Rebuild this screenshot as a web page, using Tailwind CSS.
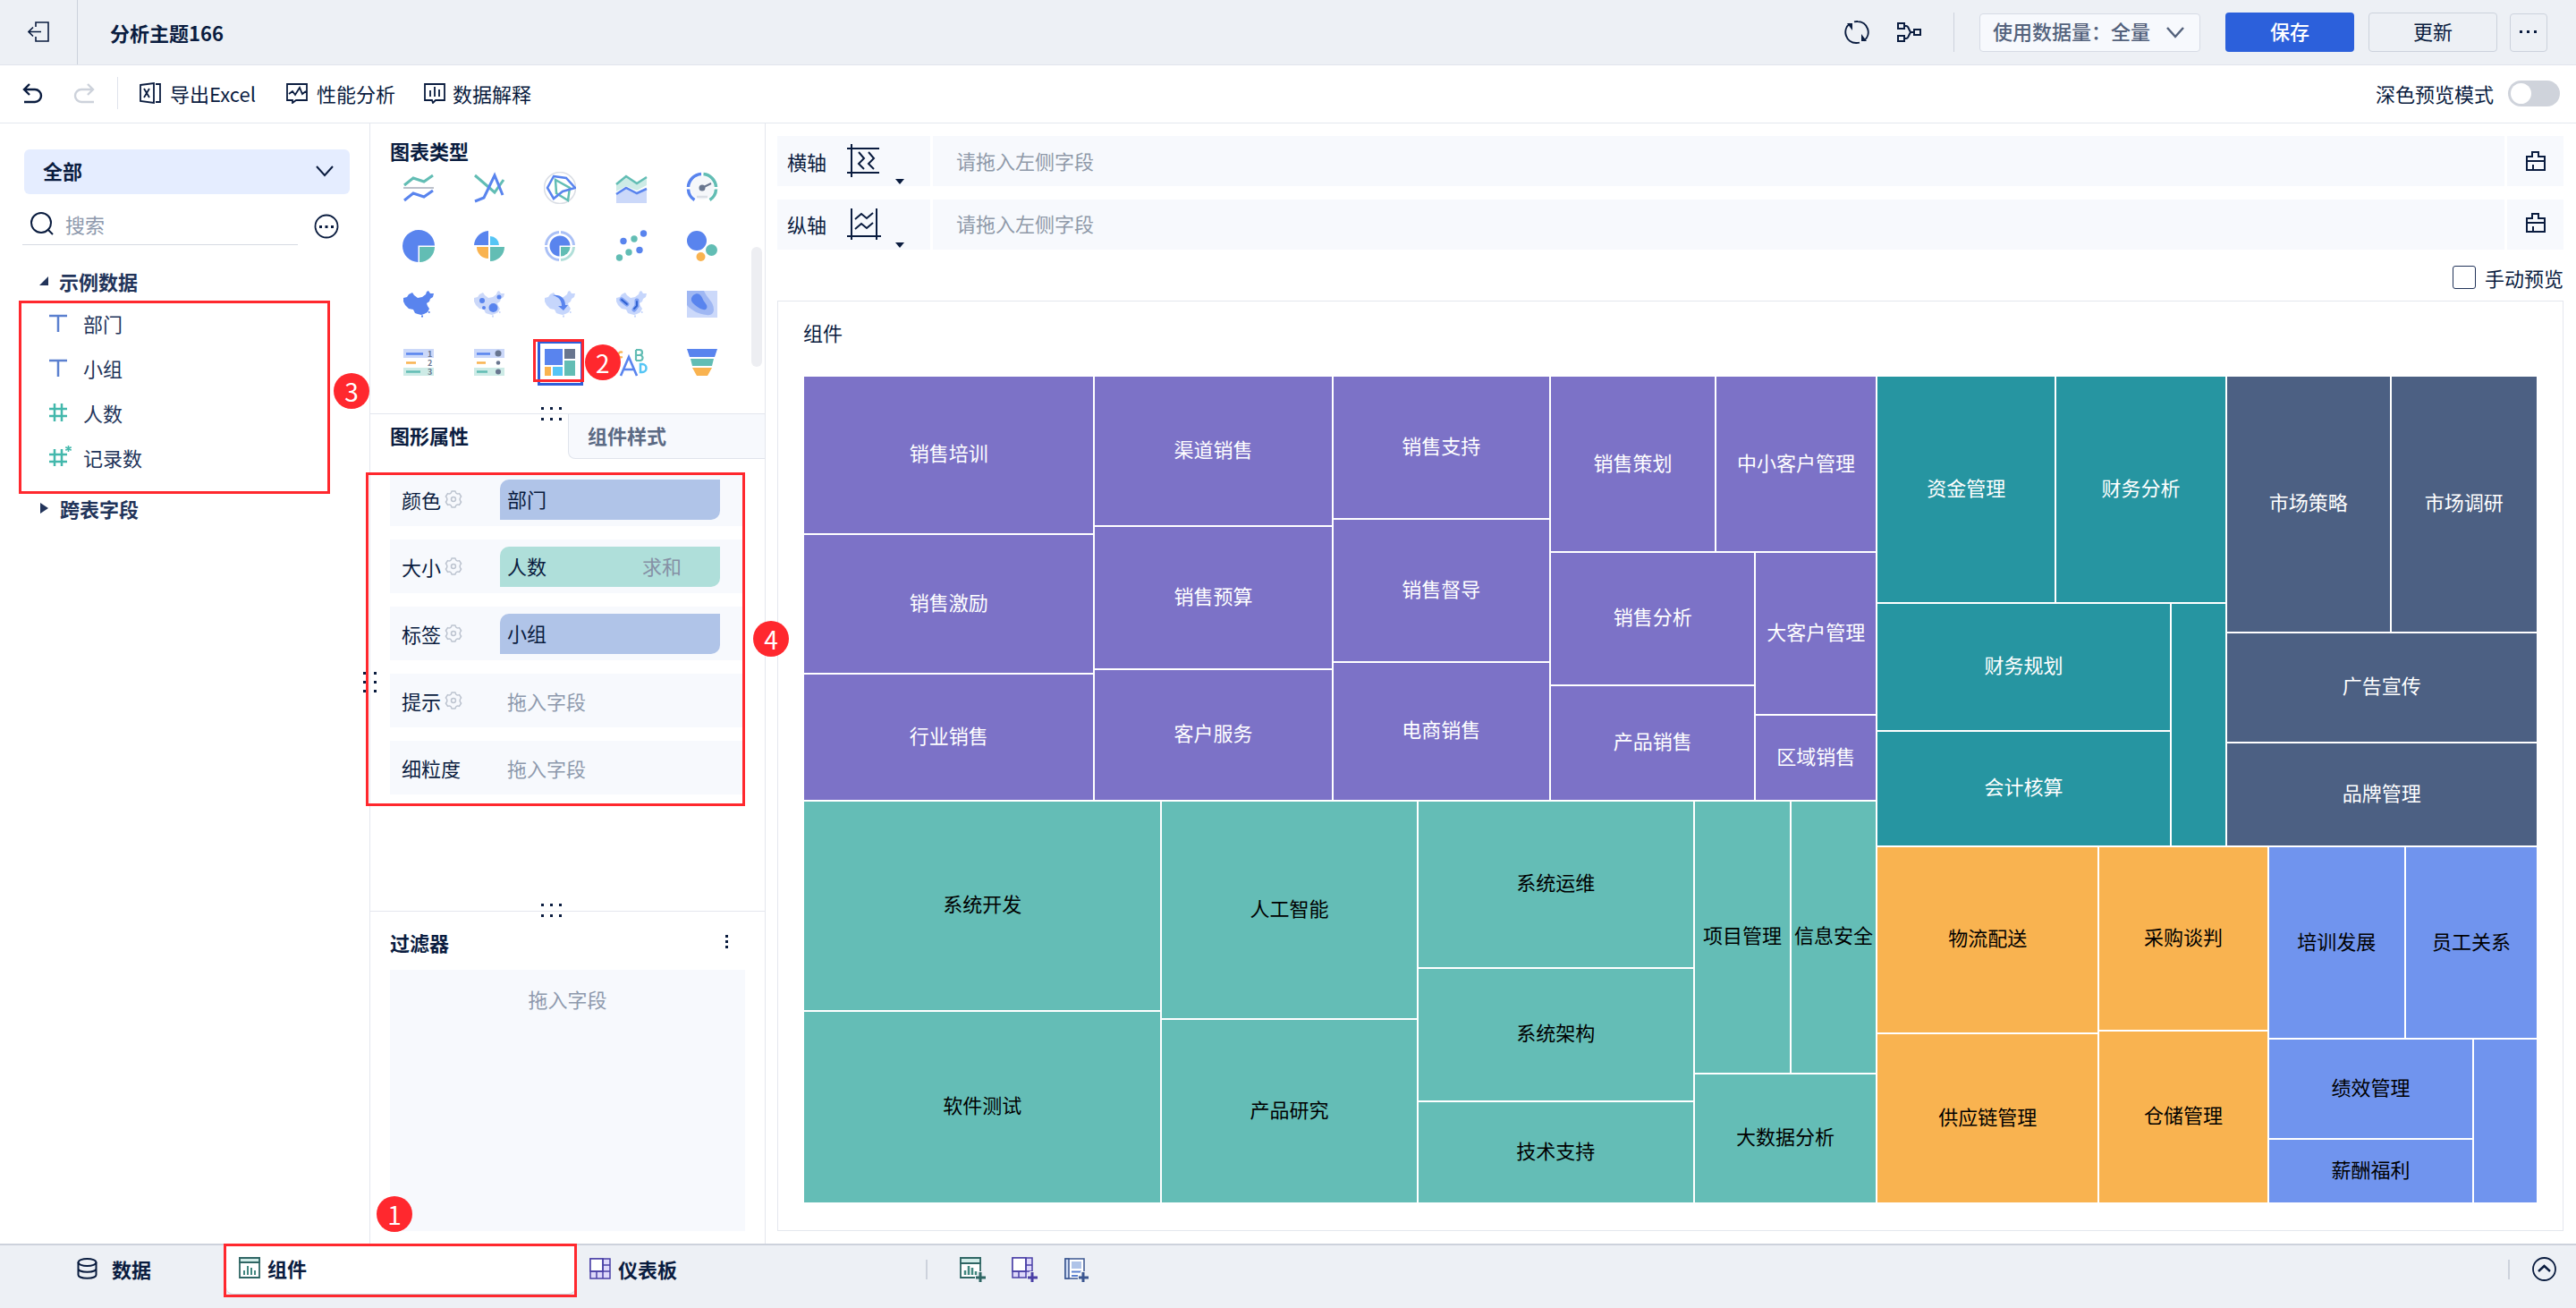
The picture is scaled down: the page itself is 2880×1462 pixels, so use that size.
<!DOCTYPE html>
<html lang="zh-CN">
<head>
<meta charset="utf-8">
<title>分析主题166</title>
<script src="https://cdn.jsdelivr.net/npm/@tailwindcss/browser@4"></script>
</head>
<body class="flex min-h-screen flex-col bg-white font-['Noto_Sans_CJK_SC',sans-serif] text-[22px] leading-8 text-[#0a1c3f]">

<svg class="hidden" aria-hidden="true">
  <symbol id="china" viewBox="0 0 34 30">
    <path d="M0 8 4 7 6 4 10 2 12 5 16 8 21 7 25 4 26 1 28 0 30 3 34 3 33 7 30 9 29 12 26 14 27 17 29 20 27 24 23 26 20 27 16 26 13 25 11 21 6 20 2 16 0 12ZM20 27.500h2v2h-2ZM28 23h1.500v2h-1.500Z"/>
  </symbol>
  <symbol id="gear" viewBox="0 0 20 20">
    <path fill="none" stroke="currentColor" stroke-width="1.500" stroke-linejoin="round" d="M8 1h4c.4 2.600 2 3.400 4.500 2.600L18.600 7c-2 1.800-2 4.200 0 6l-2.100 3.400C14 15.600 12.400 16.400 12 19H8c-.4-2.600-2-3.400-4.500-2.600L1.400 13c2-1.800 2-4.200 0-6l2.100-3.400C6 4.400 7.600 3.600 8 1Z"/>
    <circle cx="10" cy="10" r="2.500" fill="none" stroke="currentColor" stroke-width="1.500"/>
  </symbol>
  <symbol id="brush" viewBox="0 0 24 24">
    <path fill="none" stroke="currentColor" stroke-width="2" d="M2 7h6V2h7v5h7v15H2ZM2 12h20M9 16v6"/>
  </symbol>
  <symbol id="dots" viewBox="0 0 24 16">
    <path fill="currentColor" d="M0 1h3v3H0zM10 1h3v3h-3zM20 1h3v3h-3zM0 13h3v3H0zM10 13h3v3h-3zM20 13h3v3h-3z"/>
  </symbol>
</svg>

<header class="flex h-[73px] items-center border-b border-[#e0e4ec] bg-[#edf0f5]">
  <button class="flex h-full w-[87px] items-center justify-center border-r border-[#ccd2dc]" aria-label="返回">
    <svg class="h-6 w-6" viewBox="0 0 24 24" fill="none" stroke="currentColor" stroke-width="1.600"><path d="M9 6V1h14v21H9v-5M1 11.500h14M6 6.500l-5 5 5 5"/></svg>
  </button>
  <h1 class="ml-9 font-bold">分析主题166</h1>
  <div class="ml-auto flex items-center pr-8">
    <button aria-label="刷新"><svg class="h-7 w-7" viewBox="0 0 28 28" fill="none" stroke="currentColor" stroke-width="2"><path d="M13 26A12 12 0 0 1 6 4.500M15 2A12 12 0 0 1 22 23.500M11 2.400q2-.5 4-.4M13 26q2 .1 4-.4"/><path fill="currentColor" stroke="none" d="M3 4h6v8zM25 24h-6v-8z"/></svg></button>
    <button class="ml-[30px]" aria-label="血缘"><svg class="h-6 w-7" viewBox="0 0 28 24" fill="none" stroke="currentColor" stroke-width="2"><path d="M2 2h7v6H2zM2 16h7v6H2zM20 9h7v6h-7zM9 5h2q2 0 3 3l2 4-2 4q-1 3-3 3H9M16 12h4"/></svg></button>
    <span class="ml-9 h-11 w-px bg-[#ccd2dc]"></span>
    <label class="relative ml-7 block">
      <select class="h-[43px] w-[247px] appearance-none rounded border border-[#d6dbe5] bg-[#f7f9fd] pb-1 pl-3.5 font-medium text-[#54627c]" aria-label="使用数据量"><option>使用数据量：全量</option></select>
      <svg class="pointer-events-none absolute top-[11px] right-4 h-5 w-6" viewBox="0 0 24 20" fill="none" stroke="#54627c" stroke-width="2.500"><path d="M3 5l9 10 9-10"/></svg>
    </label>
    <button class="ml-7 h-11 w-36 rounded bg-[#2c60db] pb-1 font-medium text-white">保存</button>
    <button class="ml-4 h-11 w-36 rounded border border-[#ccd2dc] pb-1">更新</button>
    <button class="ml-3.5 flex h-[43px] w-[42px] items-center justify-center rounded border border-[#ccd2dc]" aria-label="更多">
      <svg class="h-1 w-5" viewBox="0 0 20 4" fill="currentColor"><path d="M0 0h3v3H0zM8 0h3v3H8zM16 0h3v3h-3z"/></svg>
    </button>
  </div>
</header>

<div class="flex h-[65px] items-center border-b border-[#e4e7ee] pb-0.5 pl-6">
  <button aria-label="撤销"><svg class="h-6 w-6" viewBox="0 0 24 24" fill="none" stroke="currentColor" stroke-width="2.400"><path d="M3 22h12a7 7 0 0 0 0-14H3M9 2 3 8l6 6"/></svg></button>
  <button class="ml-[34px] text-[#cdd2db]" aria-label="重做"><svg class="h-6 w-6" viewBox="0 0 24 24" fill="none" stroke="currentColor" stroke-width="2.400"><path d="M23 22H9A7 7 0 0 1 9 8h13M16 2l6 6-6 6"/></svg></button>
  <span class="ml-[25px] h-9 w-px bg-[#e0e4ec]"></span>
  <button class="ml-6 flex items-center gap-2.5">
    <svg class="h-6 w-6" viewBox="0 0 24 24" fill="none" stroke="currentColor" stroke-width="1.800"><path d="M1 3 16 1v22L1 21ZM18 2h5v20h-5M5 7l6 10M11 7 5 17"/></svg>导出Excel
  </button>
  <button class="ml-[34px] flex items-center gap-2.5">
    <svg class="h-6 w-6" viewBox="0 0 24 24" fill="none" stroke="currentColor" stroke-width="1.800"><path d="M1 2h22v18H11l-4 3v-3H1ZM3 13l4-3 3 4 5-8 3 7 4-3"/></svg>性能分析
  </button>
  <button class="ml-8 flex items-center gap-2">
    <svg class="h-6 w-6" viewBox="0 0 24 24" fill="none" stroke="currentColor" stroke-width="1.800"><path d="M1 2h22v18H13l-3 3-1-3H1ZM7 9v7M12 5v11M17 8v8"/></svg>数据解释
  </button>
  <label class="ml-auto flex items-center gap-4 pr-[18px]">深色预览模式
    <input type="checkbox" class="h-[29px] w-[58px] appearance-none rounded-full bg-[#cfd3db] before:mt-[3px] before:ml-[3px] before:block before:h-[23px] before:w-[23px] before:rounded-full before:bg-white">
  </label>
</div>

<main class="flex flex-1">
  <!-- Field list -->
  <aside class="w-[414px] shrink-0 border-r border-[#e4e7ee] pt-[29px]">
    <label class="relative mx-[27px] mr-[22px] block">
      <select class="h-[50px] w-full appearance-none rounded-md bg-[#e5edff] pb-1 pl-[21px] font-bold" aria-label="分组"><option>全部</option></select>
      <svg class="pointer-events-none absolute top-4 right-4 h-4 w-6" viewBox="0 0 24 16" fill="none" stroke="currentColor" stroke-width="2"><path d="M3 3l9 10 9-10"/></svg>
    </label>
    <div class="flex items-center pt-3.5 pl-[25px]">
      <label class="flex h-[43px] w-[308px] items-center gap-3 border-b border-[#d6dae2] pb-1 pl-2">
        <svg class="h-7 w-7 shrink-0" viewBox="0 0 28 28" fill="none" stroke="currentColor" stroke-width="2"><circle cx="13" cy="13" r="11"/><path d="m20 20 6 6"/></svg>
        <input type="text" placeholder="搜索" class="w-40 placeholder:text-[#8e99ad]">
      </label>
      <button class="ml-[18px]" aria-label="更多选项"><svg class="h-7 w-7" viewBox="0 0 28 28" fill="none" stroke="currentColor" stroke-width="1.800"><circle cx="14" cy="14" r="12.500"/><path fill="currentColor" stroke="none" d="M6 13h3v3H6zM12.500 13h3v3h-3zM19 13h3v3h-3z"/></svg></button>
    </div>
    <div class="mt-6 flex items-center gap-3 pl-11 font-bold text-[#22345a]">
      <svg class="h-2.5 w-2.5" viewBox="0 0 10 10" fill="currentColor"><path d="M10 0v10H0z"/></svg>示例数据
    </div>
    <div class="relative mt-1.5 pb-4 text-[#22345a]">
      <ul class="pl-[55px] [&>li]:flex [&>li]:h-[50px] [&>li]:items-center [&>li]:gap-[18px]">
        <li><svg class="h-5 w-5" viewBox="0 0 20 20" stroke="#5b80cf" stroke-width="2.500"><path d="M0 2h20M10 2v18"/></svg>部门</li>
        <li><svg class="h-5 w-5" viewBox="0 0 20 20" stroke="#5b80cf" stroke-width="2.500"><path d="M0 2h20M10 2v18"/></svg>小组</li>
        <li><svg class="h-5 w-5" viewBox="0 0 20 20" stroke="#43b8ac" stroke-width="2.500"><path d="M0 6h20M0 14h20M6 0v20M14 0v20"/></svg>人数</li>
        <li><svg class="h-5 w-5 overflow-visible" viewBox="0 0 20 20" stroke="#43b8ac" stroke-width="2.500"><path d="M0 7h20M0 15h20M6 1v19M14 1v19"/><path stroke-width="1.600" d="M21.500-3v7M18.300-1.300l6.400 3.600M24.700-1.300l-6.400 3.600"/></svg>记录数</li>
      </ul>
      <div class="absolute top-0 right-[44px] bottom-0 left-[21px] border-3 border-[#ff282e]"></div>
      <span class="absolute top-[81px] right-0 flex h-10 w-10 items-center justify-center rounded-full bg-[#ff282e] text-[28px] text-white">3</span>
    </div>
    <div class="flex items-center gap-3 pl-[45px] font-bold text-[#22345a]">
      <svg class="h-3 w-2.5" viewBox="0 0 10 12" fill="currentColor"><path d="M0 0v12l9-6z"/></svg>跨表字段
    </div>
  </aside>

  <!-- Chart configuration -->
  <section class="relative flex w-[442px] shrink-0 flex-col border-r border-[#e4e7ee]">
    <div class="relative h-[325px] border-b border-[#e4e7ee] pt-3.5">
      <h2 class="pl-[22px] font-bold">图表类型</h2>
      <div class="-mt-[7px] grid grid-cols-5 grid-rows-4 pr-[30px] pl-[14px] [&_svg]:h-9 [&_svg]:w-9 [&>button]:flex [&>button]:h-[65px] [&>button]:items-center [&>button]:justify-center">
        <button aria-label="分区折线图"><svg viewBox="0 0 36 36" fill="none" stroke-width="3"><path stroke="#62bdb4" d="M2 15l10-8 12 4L34 4"/><path stroke="#a4abb8" stroke-width="1.500" d="M1 18h34"/><path stroke="#5984ee" d="M2 32l10-8 12 4 10-7"/></svg></button>
        <button aria-label="折线图"><svg viewBox="0 0 36 36" fill="none" stroke-width="3"><path stroke="#62bdb4" d="M2 4l22 19L34 9"/><path stroke="#5984ee" d="M2 33l10-4L24 4l9 22"/></svg></button>
        <button aria-label="雷达图"><svg viewBox="0 0 36 36" fill="none"><circle cx="18" cy="18" r="17.500" stroke="#dadee5" stroke-width="1.500"/><path stroke="#62bdb4" stroke-width="2.500" d="M13 9l16 9-2 14-13-8Z"/><path stroke="#5984ee" stroke-width="2.500" d="M11 5l14 2 10 11-14 4-10 8-7-12Z"/></svg></button>
        <button aria-label="面积图"><svg viewBox="0 0 36 36" fill="none"><path fill="#cdebe6" d="M1 14l11-9 12 8 11-7v9l-11 6-12-5-11 6z"/><path fill="#cbd8f9" d="M1 25l11-7 12 6 11-5v16H1z"/><path stroke="#62bdb4" stroke-width="2.500" d="M1 14l11-9 12 8 11-7"/><path stroke="#5984ee" stroke-width="2.500" d="M1 25l11-7 12 6 11-5"/></svg></button>
        <button aria-label="仪表盘"><svg viewBox="0 0 36 36" fill="none"><circle cx="18" cy="18" r="13" fill="#f5f7fa"/><path stroke="#5984ee" stroke-width="3.500" d="M17 2.500A15.500 15.500 0 0 0 2.500 17M2.500 19.500a15 15 0 0 0 7 12"/><path stroke="#62bdb4" stroke-width="3.500" d="M19.500 2.500A15.500 15.500 0 0 1 33.500 17M33.500 19.500a15 15 0 0 1-7 12"/><circle cx="18" cy="18" r="3.500" fill="#69768f"/><path stroke="#69768f" stroke-width="2" d="M18 18l10-5"/><path stroke="#dadee5" stroke-width="2.500" d="M12 28h12"/></svg></button>

        <button aria-label="饼图"><svg viewBox="0 0 36 36"><path fill="#5984ee" d="M17.500 36A18 18 0 1 1 36 17.500H17.500z"/><path fill="#62bdb4" d="M19 19h17a17 17 0 0 1-17 17z"/></svg></button>
        <button aria-label="玫瑰图"><svg viewBox="0 0 36 36"><path fill="#5984ee" d="M17 17H1A17 17 0 0 1 17 1z"/><path fill="#55c5f5" d="M19 17V7a10 10 0 0 1 10 10z"/><path fill="#f9b350" d="M17 19v13A13 13 0 0 1 4 19z"/><path fill="#62bdb4" d="M19 19h16a16 16 0 0 1-16 16z"/></svg></button>
        <button aria-label="多层饼图"><svg viewBox="0 0 36 36" fill="none"><path stroke="#aac0f6" stroke-width="3" d="M17 2.500A15.500 15.500 0 0 0 2.500 17M2.500 19A15.500 15.500 0 0 0 17 33.500M19 2.500A15.500 15.500 0 0 1 33.500 17"/><path stroke="#b1dfd9" stroke-width="3" d="M33.500 19A15.500 15.500 0 0 1 19 33.500"/><path fill="#5984ee" d="M17.500 29.500A11.500 11.500 0 1 1 29.500 17.500h-12z"/><path fill="#62bdb4" d="M19 19h10.500A11 11 0 0 1 19 29.500z"/></svg></button>
        <button aria-label="散点图"><svg viewBox="0 0 36 36"><g fill="#5984ee"><circle cx="31.500" cy="4" r="3.700"/><circle cx="9" cy="12.500" r="3.700"/><circle cx="27" cy="22.500" r="3.700"/></g><g fill="#62bdb4"><circle cx="21" cy="10" r="3.700"/><circle cx="15" cy="25" r="3.700"/><circle cx="4.500" cy="31" r="3.700"/></g></svg></button>
        <button aria-label="气泡图"><svg viewBox="0 0 36 36"><circle cx="12" cy="12" r="11" fill="#5984ee"/><circle cx="28.500" cy="22.500" r="6.500" fill="#62bdb4"/><circle cx="16.500" cy="30" r="5" fill="#f9b350"/></svg></button>

        <button aria-label="区域地图"><svg viewBox="0 0 36 36"><use href="#china" x="1" y="3" width="34" height="30" fill="#5984ee"/></svg></button>
        <button aria-label="点地图"><svg viewBox="0 0 36 36"><use href="#china" x="1" y="3" width="34" height="30" fill="#cbd8f9"/><g fill="#5984ee"><circle cx="10" cy="14" r="3"/><circle cx="29" cy="10" r="2.500"/><circle cx="12" cy="22" r="2"/><circle cx="22.500" cy="22" r="5"/></g></svg></button>
        <button aria-label="流向地图"><svg viewBox="0 0 36 36"><use href="#china" x="1" y="3" width="34" height="30" fill="#c6d6fc"/><path fill="#5984ee" d="M10 8c9-1 14 4 14 11l3 0-5 6-6-5h4c0-6-3-10-10-12z"/></svg></button>
        <button aria-label="热力地图"><svg viewBox="0 0 36 36"><use href="#china" x="1" y="3" width="34" height="30" fill="#c6d6fc"/><path fill="none" stroke="#7ea0f3" stroke-width="5" stroke-linecap="round" d="M7 13l6 5M24 14v6l-3 4"/><path fill="none" stroke="#2c5fcf" stroke-width="1.800" stroke-linecap="round" d="M7 13l6 5M24 15v5l-3 3"/></svg></button>
        <button aria-label="轮廓图"><svg viewBox="0 0 36 36"><path fill="#ccd9fa" d="M1 3h34v30H1z"/><path fill="#9fb7f3" d="M1 3h19c3 8 11 12 11 21 0 4-3 7-8 6C14 29 6 25 1 19z"/><path fill="#5984ee" d="M8 8c6-4 9 0 11 5 2 4 7 7 3 11-4 1-10-3-13-6-4-3-4-7-1-10z"/></svg></button>

        <button aria-label="分组表"><svg viewBox="0 0 36 36"><path fill="#cbd8f9" d="M1 3h34v10H1z"/><path fill="#cdebe6" d="M1 24h34v9H1z"/><path stroke="#5984ee" stroke-width="2.500" d="M4 8.500h19"/><path stroke="#f9b350" stroke-width="2.500" d="M4 18.500h11"/><path stroke="#62bdb4" stroke-width="2.500" d="M4 28.500h16"/><g fill="#69768f" font-size="9" font-weight="700"><text x="28" y="11.500">1</text><text x="28" y="21.500">2</text><text x="28" y="31.500">3</text></g></svg></button>
        <button aria-label="明细表"><svg viewBox="0 0 36 36"><path fill="#cbd8f9" d="M1 3h34v10H1z"/><path fill="#cdebe6" d="M1 24h34v9H1z"/><path stroke="#5984ee" stroke-width="2.500" d="M4 8.500h15"/><path stroke="#f9b350" stroke-width="2.500" d="M4 18.500h10"/><path stroke="#62bdb4" stroke-width="2.500" d="M4 28.500h12"/><g fill="#69768f"><circle cx="28" cy="8" r="3.500"/><circle cx="28" cy="18.500" r="2.300"/><circle cx="28" cy="28.500" r="3"/></g></svg></button>
        <button class="relative" aria-label="矩形树图">
          <svg viewBox="0 0 36 36"><path fill="#5984ee" d="M1 3h20v18H1z"/><path fill="#69768f" d="M23 3h12v11H23z"/><path fill="#62bdb4" d="M23 16h12v17H23z"/><path fill="#f9b350" d="M1 23h7v10H1z"/><path fill="#55c5f5" d="M10 23h11v10H10z"/></svg>
          <span class="absolute top-[9px] left-[14px] h-[50px] w-[51px] border-3 border-[#2f5fd9]"></span>
          <span class="absolute top-[7px] left-[9px] h-12 w-[57px] border-3 border-[#ff282e]"></span>
          <span class="absolute top-[13px] left-[67px] z-10 flex h-10 w-10 items-center justify-center rounded-full bg-[#ff282e] text-[28px] text-white">2</span>
        </button>
        <button aria-label="词云"><svg viewBox="0 0 36 36" fill="none" stroke-width="2.200"><path stroke="#5984ee" stroke-width="2.600" d="M6 33l9-21 9 21M9 26h12"/><path stroke="#62bdb4" d="M23 4v12M23 4h4a3 3 0 0 1 0 6h-4M27 10a3 3 0 0 1 1 6h-5"/><path stroke="#55c5f5" stroke-width="2.500" d="M28 20v9h2a4 4 0 0 0 0-9z"/><path stroke="#f9b350" d="M8 7c-5-3-7 7 0 5"/></svg></button>
        <button aria-label="漏斗图"><svg viewBox="0 0 36 36"><path fill="#5984ee" d="M1 3h34l-3 9H4z"/><path fill="#62bdb4" d="M5 14h26l-2 8H7z"/><path fill="#f9b350" d="M7 24h22l-5 9H12z"/></svg></button>
      </div>
      <span class="absolute top-[138px] right-[3px] h-[134px] w-3 rounded-full bg-[#edeef2]"></span>
      <svg class="absolute -bottom-2 left-[191px] h-4 w-6"><use href="#dots"/></svg>
    </div>

    <div class="flex h-[50px]">
      <button class="w-[221px] pb-1 pl-[22px] text-left font-bold">图形属性</button>
      <button class="flex-1 rounded-bl-lg border-b border-l border-[#e0e4ec] bg-[#f7f9fd] pb-1 pl-[21px] text-left font-bold text-[#5b6a84]">组件样式</button>
    </div>

    <div class="relative mt-[15px] pb-[13px]">
      <div class="flex flex-col gap-[15px] pr-[22px] pl-[22px] [&_button]:pb-0.5 [&>div]:flex [&>div]:h-15 [&>div]:items-center [&>div]:bg-[#f7f9fd] [&>div]:pl-[13px]">
        <div><span class="flex w-[110px] items-center gap-1">颜色<svg class="h-5 w-5 text-[#bcc3cf]"><use href="#gear"/></svg></span><button class="h-[45px] w-[246px] rounded-tl-[10px] rounded-br-[10px] bg-[#b0c4e8] pl-2 text-left">部门</button></div>
        <div><span class="flex w-[110px] items-center gap-1">大小<svg class="h-5 w-5 text-[#bcc3cf]"><use href="#gear"/></svg></span><button class="flex h-[45px] w-[246px] items-center justify-between rounded-tl-[10px] rounded-br-[10px] bg-[#afdfda] pr-[43px] pl-2">人数<span class="text-[#8590a5]">求和</span></button></div>
        <div><span class="flex w-[110px] items-center gap-1">标签<svg class="h-5 w-5 text-[#bcc3cf]"><use href="#gear"/></svg></span><button class="h-[45px] w-[246px] rounded-tl-[10px] rounded-br-[10px] bg-[#b0c4e8] pl-2 text-left">小组</button></div>
        <div><span class="flex w-[110px] items-center gap-1">提示<svg class="h-5 w-5 text-[#bcc3cf]"><use href="#gear"/></svg></span><span class="pl-2 text-[#8e99ad]">拖入字段</span></div>
        <div><span class="w-[110px]">细粒度</span><span class="pl-2 text-[#8e99ad]">拖入字段</span></div>
      </div>
      <svg class="absolute top-[223px] -left-3 h-6 w-6 rotate-90"><use href="#dots" width="24" height="16" y="4"/></svg>
      <div class="absolute top-0 right-[22px] bottom-0 -left-[5px] border-3 border-[#ff282e]"></div>
      <span class="absolute top-[166px] -right-[27px] z-10 flex h-10 w-10 items-center justify-center rounded-full bg-[#ff282e] text-[28px] text-white">4</span>
    </div>

    <div class="relative mt-[117px] flex flex-1 flex-col border-t border-[#e4e7ee] px-[22px] pt-[18px] pb-3.5">
      <svg class="absolute -top-2.5 left-[191px] h-4 w-6"><use href="#dots"/></svg>
      <div class="flex items-center justify-between pr-[18px]">
        <h2 class="font-bold">过滤器</h2>
        <button aria-label="过滤器选项"><svg class="h-4 w-1" viewBox="0 0 4 16" fill="currentColor"><path d="M0 0h3v3H0zM0 6h3v3H0zM0 12h3v3H0z"/></svg></button>
      </div>
      <div class="mt-[15px] flex-1 bg-[#f7f9fd] pt-4 text-center text-[#8e99ad]">拖入字段</div>
    </div>
    <span class="absolute bottom-[13px] left-[7px] flex h-10 w-10 items-center justify-center rounded-full bg-[#ff282e] text-[28px] text-white">1</span>
  </section>

  <!-- Canvas -->
  <section class="flex min-w-0 flex-1 flex-col pt-3.5 pr-3.5 pb-3.5 pl-[13px]">
    <div class="flex h-14 gap-[3px]">
      <div class="relative flex w-[171px] items-center bg-[#f7f9fd] pl-[11px]">横轴
        <button class="ml-[22px]" aria-label="横轴类型"><svg class="h-10 w-10" viewBox="0 0 40 40" fill="none" stroke="currentColor" stroke-width="2"><path d="M6 1v37M1 6h36M1 33h36M14 10l6 7-6 6 6 6M25 10l6 7-6 6 6 6"/></svg></button>
        <svg class="absolute right-[29px] bottom-0.5 h-1.5 w-2.5" viewBox="0 0 10 6" fill="currentColor"><path d="M0 0h10L5 6z"/></svg>
      </div>
      <div class="flex flex-1 items-center bg-[#f7f9fd] pb-0.5 pl-[26px] text-[#8f99a9]">请拖入左侧字段</div>
      <button class="flex w-[63px] items-center justify-center bg-[#f7f9fd]" aria-label="清空横轴"><svg class="h-6 w-6"><use href="#brush"/></svg></button>
    </div>
    <div class="mt-[15px] flex h-14 gap-[3px]">
      <div class="relative flex w-[171px] items-center bg-[#f7f9fd] pb-0.5 pl-[11px]">纵轴
        <button class="ml-[22px]" aria-label="纵轴类型"><svg class="h-10 w-10" viewBox="0 0 40 40" fill="none" stroke="currentColor" stroke-width="2"><path d="M6 3v35M34 3v35M1 34h38M10 15l7-6 6 5 7-6M10 26l7-6 6 5 7-6"/></svg></button>
        <svg class="absolute right-[29px] bottom-0.5 h-1.5 w-2.5" viewBox="0 0 10 6" fill="currentColor"><path d="M0 0h10L5 6z"/></svg>
      </div>
      <div class="flex flex-1 items-center bg-[#f7f9fd] pb-1 pl-[26px] text-[#8f99a9]">请拖入左侧字段</div>
      <button class="flex w-[63px] items-center justify-center bg-[#f7f9fd] pb-1" aria-label="清空纵轴"><svg class="h-6 w-6"><use href="#brush"/></svg></button>
    </div>
    <label class="mt-[15px] flex h-8 items-center gap-2.5 self-end">
      <input type="checkbox" class="h-[26px] w-[26px] appearance-none rounded-[3px] border border-[#22345a] bg-white">手动预览
    </label>
    <div class="mt-[10px] flex flex-1 flex-col border border-[#e4e7ee] px-7 pt-[18px] pb-[30px]">
      <h3>组件</h3>
      <div id="treemap" class="mt-[33px] flex flex-1"></div>
    </div>
  </section>
</main>

<footer class="flex h-[72px] items-start border-t-2 border-[#cdd2dc] bg-[#edf0f5] font-bold">
  <nav class="flex">
    <a href="#" class="flex h-[55px] w-[253px] items-center gap-4 pb-1 pl-[86px]">
      <svg class="h-6 w-[23px]" viewBox="0 0 23 24" fill="none" stroke="currentColor" stroke-width="2"><ellipse cx="11.500" cy="5" rx="10" ry="4"/><path d="M1.500 5v14c0 5 20 5 20 0V5M1.500 12c0 5 20 5 20 0"/></svg>数据
    </a>
    <a href="#" class="relative flex h-[55px] w-[390px] items-center gap-2 rounded-b-lg border-b border-[#cdd2dc] bg-white pb-1 pl-3.5">
      <svg class="h-6 w-6" viewBox="0 0 24 24" fill="none" stroke="#2f6664" stroke-width="1.800"><path fill="#fff" d="M1 1h22v22H1z"/><path fill="#d2ece8" d="M1 1h22v5H1z"/><path stroke="#41877f" stroke-width="2" d="M6 20v-5M10 20V10M14 20v-8M18 20v-5"/></svg>组件
      <span class="absolute -top-0.5 -right-0.5 -bottom-1 -left-[3px] border-3 border-[#ff282e]"></span>
    </a>
    <a href="#" class="flex h-[55px] items-center gap-2 pb-1 pl-4">
      <svg class="h-6 w-6" viewBox="0 0 24 24" fill="#ded8fa" stroke="#4a3fa6" stroke-width="1.500"><path d="M1 1h22v22H1z"/><path fill="#fff" d="M1 1h14v14H1z"/><path d="M15 1v22M1 15h22M15 8h8M8 15v8"/></svg>仪表板
    </a>
  </nav>
  <span class="mt-4 ml-[278px] h-[22px] w-0.5 bg-[#cdd2dc]"></span>
  <div class="mt-[13px] ml-9 flex gap-7">
    <button aria-label="新建组件"><svg class="h-[29px] w-[30px]" viewBox="0 0 30 29" fill="none" stroke="#2f6664" stroke-width="1.800"><path fill="#fff" d="M1 1h22v22H1z"/><path fill="#d2ece8" d="M1 1h22v6H1z"/><path stroke="#41877f" stroke-width="2.500" d="M6 20v-5M10 20V10M14 20v-8M18 20v-4"/><path stroke="#edf0f5" stroke-width="6" d="M23 16v12M17 23h12"/><path stroke-width="3" d="M23 17v11M18 23h11"/></svg></button>
    <button aria-label="新建仪表板"><svg class="h-[29px] w-[30px]" viewBox="0 0 30 29" fill="none" stroke="#4a3fa6" stroke-width="1.500"><path fill="#ded8fa" d="M1 1h22v22H1z"/><path fill="#fff" d="M1 1h15v15H1z"/><path d="M16 1v22M1 16h22M16 9h7M8 16v7"/><path stroke="#edf0f5" stroke-width="6" d="M23 16v12M17 23h12"/><path stroke-width="3" d="M23 17v11M18 23h11"/></svg></button>
    <button aria-label="新建报告"><svg class="h-[29px] w-[30px]" viewBox="-1 0 30 29" fill="none" stroke="#3b5690" stroke-width="1.500"><path fill="#fff" d="M1 2h21v22H1z"/><path fill="#cfdcf5" d="M1 2h4v22H1z"/><path fill="#b0c4e8" stroke="none" d="M8 5h11v8H8z"/><path stroke="#5b80cf" stroke-width="2" d="M8 16.500h11M8 21h7"/><path stroke="#edf0f5" stroke-width="6" d="M21 16v12M15 23h12"/><path stroke-width="3" d="M21 17v11M16 23h11"/></svg></button>
  </div>
  <span class="mt-4 ml-auto h-[22px] w-0.5 bg-[#cdd2dc]"></span>
  <button class="mt-[13px] mr-[22px] ml-[25px]" aria-label="收起"><svg class="h-[27px] w-[27px]" viewBox="0 0 27 27" fill="none" stroke="currentColor" stroke-width="1.800"><circle cx="13.500" cy="13.500" r="12.500"/><path stroke-width="2.400" d="m7 16 6.500-6 6.500 6"/></svg></button>
</footer>

<script>
// Each node: [weight, 'row' | 'col', children, colour classes] or [weight, label]
const purple = 'bg-[#7c72c7] text-white', teal = 'bg-[#64bdb6] text-black', sea = 'bg-[#2695a1] text-white';
const navy = 'bg-[#4c6083] text-white', amber = 'bg-[#f9b350] text-black', blue = 'bg-[#7094ee] text-black';
const tree = [1, 'row', [
  [1199, 'col', [
    [475, 'row', [
      [325, 'col', [[177, '销售培训'], [156, '销售激励'], [142, '行业销售']]],
      [266, 'col', [[168, '渠道销售'], [160, '销售预算'], [147, '客户服务']]],
      [243, 'col', [[160, '销售支持'], [160, '销售督导'], [155, '电商销售']]],
      [365, 'col', [
        [197, 'row', [[185, '销售策划'], [180, '中小客户管理']]],
        [278, 'row', [
          [230, 'col', [[149, '销售分析'], [129, '产品销售']]],
          [136, 'col', [[183, '大客户管理'], [95, '区域销售']]]
        ]]
      ]]
    ], purple],
    [450, 'row', [
      [400, 'col', [[235, '系统开发'], [215, '软件测试']]],
      [286, 'col', [[244, '人工智能'], [206, '产品研究']]],
      [309, 'col', [[187, '系统运维'], [149, '系统架构'], [114, '技术支持']]],
      [204, 'col', [
        [306, 'row', [[108, '项目管理'], [96, '信息安全']]],
        [144, '大数据分析']
      ]]
    ], teal]
  ]],
  [738, 'col', [
    [526, 'row', [
      [390, 'col', [
        [254, 'row', [[200, '资金管理'], [190, '财务分析']]],
        [272, 'row', [
          [330, 'col', [[143, '财务规划'], [129, '会计核算']]],
          [60, '']
        ]]
      ], sea],
      [348, 'col', [
        [289, 'row', [[184, '市场策略'], [164, '市场调研']]],
        [122, '广告宣传'],
        [115, '品牌管理']
      ], navy]
    ]],
    [399, 'row', [
      [437, 'row', [
        [248, 'col', [[209, '物流配送'], [190, '供应链管理']]],
        [189, 'col', [[206, '采购谈判'], [193, '仓储管理']]]
      ], amber],
      [301, 'col', [
        [215, 'row', [[153, '培训发展'], [148, '员工关系']]],
        [184, 'row', [
          [231, 'col', [[112, '绩效管理'], [72, '薪酬福利']]],
          [70, '']
        ]]
      ], blue]
    ]]
  ]]
]];
function draw(node, parent, colour) {
  const el = document.createElement('div');
  el.style.flexGrow = node[0];
  if (node.length === 2) {
    el.className = 'flex min-h-0 min-w-0 basis-0 items-center justify-center border border-white whitespace-nowrap ' + colour;
    const label = document.createElement('span');
    label.className = 'pb-1.5';
    label.textContent = node[1];
    el.append(label);
  } else {
    el.className = 'flex min-h-0 min-w-0 basis-0 ' + (node[1] === 'row' ? 'flex-row' : 'flex-col');
    node[2].forEach(child => draw(child, el, node[3] || colour));
  }
  parent.append(el);
}
draw(tree, document.getElementById('treemap'), '');
</script>
</body>
</html>
